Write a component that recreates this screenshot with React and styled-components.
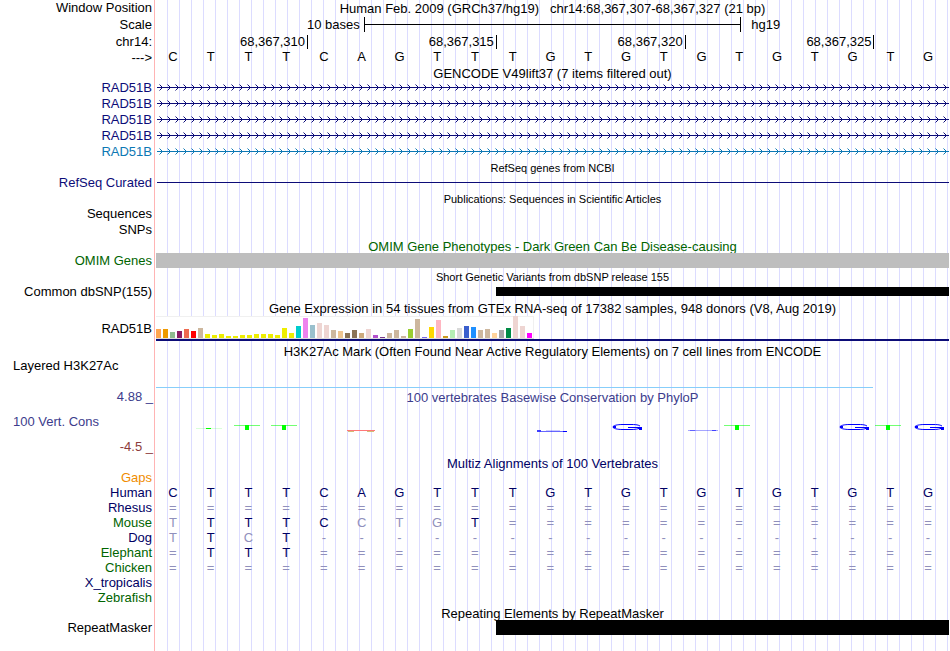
import React, { useId } from 'react'
import styled, { createGlobalStyle } from 'styled-components'

const Colors = {
  BLACK: '#000000',
  NAVY: '#0c0c78',
  DEEP_NAVY: '#000064',
  BLUE: '#0c78b4',
  GREEN: '#006400',
  SLATE: '#3c3c8c',
  BRICK: '#8c3c3c',
  ORANGE: '#f08c00',
  GRAY: '#bebebe',
  SKY: '#87cefa',
  GRID: '#dcdcff',
  MARGIN_LINE: '#ffb4b4',
  FADED: '#9090bc',
}

const BASES = 'CTTTCAGTTTGTGTGTGTGTG'

const TRANSCRIPTS = [Colors.NAVY, Colors.NAVY, Colors.NAVY, Colors.NAVY, Colors.BLUE]

const TICKS = [
  { position: '68,367,310', from: 1, to: 5 },
  { position: '68,367,315', from: 5, to: 10 },
  { position: '68,367,320', from: 10, to: 15 },
  { position: '68,367,325', from: 15, to: 20 },
]

const SPECIES = [
  { name: 'Gaps', color: Colors.ORANGE, bases: '' },
  { name: 'Human', color: Colors.DEEP_NAVY, bases: BASES },
  { name: 'Rhesus', color: Colors.DEEP_NAVY, bases: '=====================' },
  { name: 'Mouse', color: Colors.GREEN, bases: 'TTTTCCTGT============' },
  { name: 'Dog', color: Colors.DEEP_NAVY, bases: 'TTCT-----------------' },
  { name: 'Elephant', color: Colors.GREEN, bases: '=TTT=================' },
  { name: 'Chicken', color: Colors.GREEN, bases: '=====================' },
  { name: 'X_tropicalis', color: Colors.DEEP_NAVY, bases: '' },
  { name: 'Zebrafish', color: Colors.GREEN, bases: '' },
]

// [height, color] for each of the 54 tissues
const TISSUES = [
  [9, '#ffa54f'], [9, '#ee9a00'], [6, '#8fbc8f'], [7, '#8b1c62'], [9, '#ee6a50'], [7, '#ff0000'],
  [10, '#cdb79e'], [4, '#eeee00'], [3, '#eeee00'], [4, '#eeee00'], [2, '#eeee00'], [2, '#eeee00'],
  [3, '#eeee00'], [3, '#eeee00'], [4, '#eeee00'], [4, '#eeee00'], [4, '#eeee00'], [3, '#eeee00'],
  [10, '#eeee00'], [5, '#eeee00'], [12, '#00cdcd'], [20, '#ee82ee'], [13, '#9ac0cd'], [15, '#eed5d2'],
  [13, '#eed5d2'], [8, '#cdb79e'], [7, '#eec591'], [5, '#8b7355'], [8, '#8b7355'], [5, '#cdaa7d'],
  [9, '#eed5d2'], [3, '#b452cd'], [1, '#7a378b'], [5, '#cdb79e'], [8, '#cdb79e'], [2, '#cdb79e'],
  [9, '#9acd32'], [19, '#cdb79e'], [1, '#7a67ee'], [11, '#ffd700'], [18, '#ffb6c1'], [2, '#cd9b1d'],
  [8, '#b4eeb4'], [10, '#d9d9d9'], [12, '#3a5fcd'], [11, '#1e90ff'], [8, '#cdb79e'], [9, '#cdb79e'],
  [5, '#ffd39b'], [8, '#a6a6a6'], [10, '#008b45'], [22, '#eed5d2'], [12, '#eed5d2'], [5, '#ff00ff'],
]

const MARKS = {
  1: 'faintT', 2: 'T', 3: 'T', 5: 'A', 10: 'flatG', 12: 'G', 14: 'faintG', 15: 'T', 18: 'G', 19: 'T', 20: 'G',
}

const GlobalStyle = createGlobalStyle`
  body {
    margin: 0;
    background: white;
    font-family: "Liberation Sans", Arial, sans-serif;
    font-size: 13px;
  }
`

const Browser = styled.main`
  min-height: 100vh;
  overflow: hidden;
  background-image:
    linear-gradient(${Colors.MARGIN_LINE}, ${Colors.MARGIN_LINE}),
    repeating-linear-gradient(to right, transparent 0 11px, ${Colors.GRID} 11px 12px);
  background-position: 154px 0, 156px 0;
  background-size: 1px 100%, calc(100% - 157px) 100%;
  background-repeat: no-repeat;
`

const Row = styled.div`
  display: grid;
  grid-template-columns: 156px minmax(0, 1fr);
  padding-right: 1px;
  min-height: ${props => props.$height || 16}px;
  line-height: ${props => props.$height || 16}px;
`

const BaseRow = styled(Row)`
  grid-template-columns: 154px minmax(0, 1fr);
  padding-right: 3px;
`

const Label = styled.div`
  color: ${props => props.$color || Colors.BLACK};
  padding: 0 4px 0 13px;
  text-align: ${props => props.$align || 'right'};
  white-space: nowrap;
`

const BaseLabel = styled(Label)`padding-right: 2px;`

const ScoreLabel = styled(Label)`padding-right: 3px;`

const SignalLabel = styled(Label)`line-height: 10px;`

const Title = styled.h2`
  grid-column: 2;
  margin: 1px 0 -1px;
  color: ${props => props.$color || Colors.BLACK};
  font-size: ${props => props.$small ? 11 : 13}px;
  font-weight: normal;
  line-height: inherit;
  text-align: center;
  white-space: pre;
`

const Lane = styled.div`
  display: grid;
  grid-template-columns: repeat(${props => props.$columns || 21}, minmax(0, 1fr));
  align-items: ${props => props.$align || 'center'};
`

const ScaleText = styled.span`
  grid-column: ${props => props.$span};
  padding: ${props => props.$end ? '0 0 0 10px' : '0 4px 0 0'};
  text-align: ${props => props.$end ? 'left' : 'right'};
`

const ScaleBar = styled.div`
  grid-column: 12 / 32;
  height: 15px;
  border: solid black;
  border-width: 0 1px;
  background: linear-gradient(black, black) center / 100% 1px no-repeat;
`

const Tick = styled.span`
  grid-column: ${props => props.$from} / ${props => props.$to};
  margin-right: -1px;
  padding-right: 2px;
  border-right: 1px solid black;
  line-height: 14px;
  text-align: right;
`

const Base = styled.span`
  text-align: center;
  line-height: 14px;
`

const Drawing = styled.svg`
  display: block;
  width: 100%;
  height: 16px;
`

const Block = styled.div`
  grid-column: ${props => props.$from || 1} / -1;
  height: ${props => props.$height || 15}px;
  background: ${props => props.$color || Colors.BLACK};
`

const IntronLine = styled.div`
  grid-column: 1 / -1;
  height: 1px;
  margin: 7px 0 8px 1px;
  background: ${Colors.NAVY};
`

const SignalLine = styled.div`
  grid-column: 1 / 20;
  height: 1px;
  background: ${Colors.SKY};
`

const Expression = styled.div`
  border-bottom: 2px solid ${Colors.NAVY};
`

const TissueChart = styled.div`
  display: flex;
  align-items: flex-end;
  gap: 2px;
  width: max-content;
  height: 22px;
  padding-right: 2px;
  background: white;
  border-bottom: 1px solid #dcdcdc;
  box-shadow: inset 0 1px #f0f0f0, inset -1px 0 #f0f0f0;
`

const Tissue = styled.div`
  width: 5px;
  height: ${props => props.$height}px;
  background: ${props => props.$color};
`

const Alignment = styled.table`
  width: calc(100% - 3px);
  table-layout: fixed;
  border-collapse: collapse;
  line-height: 15px;
`

const Species = styled.th`
  width: 154px;
  box-sizing: border-box;
  padding: 0 2px 0 0;
  color: ${props => props.$color};
  font-weight: normal;
  text-align: right;
`

const Aligned = styled.td`
  height: 15px;
  padding: 0;
  color: ${props => props.$match ? Colors.DEEP_NAVY : Colors.FADED};
  text-align: center;
`

const Transcript = ({ color }) => {
  const id = useId()
  return (
    <Drawing>
      <defs>
        <pattern id={id} width="8" height="16" patternUnits="userSpaceOnUse">
          <path d="M6 7h1v1h-1zM5 6h1v1h-1zM5 8h1v1h-1zM4 5h1v1h-1zM4 9h1v1h-1z" fill={color} />
          <path d="M3 4h1v1h-1zM3 10h1v1h-1z" fill={color} opacity="0.5" />
        </pattern>
      </defs>
      <rect x="1" y="7" width="100%" height="1" fill={color} />
      <rect x="1" width="100%" height="16" fill={`url(#${id})`} />
    </Drawing>
  )
}

const ConservationMark = ({ kind }) => (
  <Drawing>
    {kind === 'T' && (
      <g fill="#00ff00">
        <rect x="2" y="3" width="26" height="1" opacity="0.55" />
        <rect x="13" y="3" width="4" height="5" />
      </g>
    )}
    {kind === 'faintT' && (
      <g fill="#00ff00">
        <rect x="2" y="6" width="26" height="1" opacity="0.15" />
        <rect x="12" y="6" width="5" height="1" />
      </g>
    )}
    {kind === 'A' && (
      <g>
        <rect x="2" y="8" width="28" height="1" fill="#ff7878" />
        <rect x="3" y="9" width="6" height="1" fill="#d2be78" />
        <rect x="22" y="9" width="7" height="1" fill="#d2be78" />
      </g>
    )}
    {kind === 'G' && (
      <g fill="none" stroke="#0000ff">
        <path d="M31 4C29 2.500 25 2.500 22 2.500H14C8 2.500 4 3.500 4 5S8 7.500 14 7.500H22C26 7.500 29 7 31 6" />
        <path d="M4 5h3M29 6h4" strokeWidth="2" />
        <path d="M19 5.500h13M30 7.500h3" />
      </g>
    )}
    {kind === 'flatG' && (
      <g fill="#0000ff">
        <rect x="3" y="8" width="4" height="2" opacity="0.75" />
        <rect x="7" y="9" width="22" height="1" opacity="0.6" />
        <rect x="12" y="8" width="14" height="1" opacity="0.2" />
        <rect x="29" y="9" width="4" height="1" />
      </g>
    )}
    {kind === 'faintG' && (
      <g fill="#0000ff">
        <rect x="3" y="8" width="30" height="1" opacity="0.35" />
        <rect x="5" y="8" width="5" height="1" opacity="0.4" />
        <rect x="27" y="8" width="4" height="1" opacity="0.6" />
      </g>
    )}
  </Drawing>
)

const TitleRow = ({ children, height, color, small }) => (
  <Row $height={height}><Title $color={color} $small={small}>{children}</Title></Row>
)

const Position = () => (
  <header>
    <Row>
      <Label>Window Position</Label>
      <Title>{'Human Feb. 2009 (GRCh37/hg19)   chr14:68,367,307-68,367,327 (21 bp)'}</Title>
    </Row>
    <Row $height={17}>
      <Label>Scale</Label>
      <Lane $columns={42}>
        <ScaleText $span="1 / 12">10 bases</ScaleText>
        <ScaleBar />
        <ScaleText $span="32 / -1" $end>hg19</ScaleText>
      </Lane>
    </Row>
    <Row $height={17}>
      <Label>chr14:</Label>
      <Lane>
        {TICKS.map(tick => (
          <Tick key={tick.position} $from={tick.from} $to={tick.to}>{tick.position}</Tick>
        ))}
      </Lane>
    </Row>
    <BaseRow>
      <BaseLabel>---&gt;</BaseLabel>
      <Lane $align="start">
        {BASES.split('').map((base, i) => <Base key={i}>{base}</Base>)}
      </Lane>
    </BaseRow>
  </header>
)

const GeneTracks = () => (
  <section>
    <TitleRow height={14}>GENCODE V49lift37 (7 items filtered out)</TitleRow>
    {TRANSCRIPTS.map((color, i) => (
      <Row key={i}>
        <Label $color={color}>RAD51B</Label>
        <Transcript color={color} />
      </Row>
    ))}
    <TitleRow height={15} small>RefSeq genes from NCBI</TitleRow>
    <Row>
      <Label $color={Colors.NAVY}>RefSeq Curated</Label>
      <Lane><IntronLine /></Lane>
    </Row>
  </section>
)

const VariantTracks = () => (
  <section>
    <TitleRow height={15} small>Publications: Sequences in Scientific Articles</TitleRow>
    <Row><Label>Sequences</Label></Row>
    <Row><Label>SNPs</Label></Row>
    <TitleRow height={15} color={Colors.GREEN}>OMIM Gene Phenotypes - Dark Green Can Be Disease-causing</TitleRow>
    <Row $height={15}>
      <Label $color={Colors.GREEN}>OMIM Genes</Label>
      <Lane><Block $color={Colors.GRAY} /></Lane>
    </Row>
    <TitleRow small>Short Genetic Variants from dbSNP release 155</TitleRow>
    <Row $height={15}>
      <Label>Common dbSNP(155)</Label>
      <Lane><Block $from={10} $height={9} /></Lane>
    </Row>
  </section>
)

const RegulationTracks = () => (
  <section>
    <TitleRow height={17}>Gene Expression in 54 tissues from GTEx RNA-seq of 17382 samples, 948 donors (V8, Aug 2019)</TitleRow>
    <Row $height={25}>
      <Label>RAD51B</Label>
      <Expression>
        <TissueChart>
          {TISSUES.map(([height, color], i) => <Tissue key={i} $height={height} $color={color} />)}
        </TissueChart>
      </Expression>
    </Row>
    <TitleRow height={20}>H3K27Ac Mark (Often Found Near Active Regulatory Elements) on 7 cell lines from ENCODE</TitleRow>
    <Row $height={27}>
      <SignalLabel $align="left">Layered H3K27Ac</SignalLabel>
      <Lane $align="end"><SignalLine /></Lane>
    </Row>
  </section>
)

const Conservation = () => (
  <section>
    <Row $height={18}>
      <ScoreLabel $color={Colors.SLATE}>4.88 _</ScoreLabel>
      <Title $color={Colors.SLATE}>100 vertebrates Basewise Conservation by PhyloP</Title>
    </Row>
    <Row $height={32}>
      <Label $color={Colors.SLATE} $align="left">100 Vert. Cons</Label>
      <Lane $align="end">
        {BASES.split('').map((base, i) => <ConservationMark key={i} kind={MARKS[i]} />)}
      </Lane>
    </Row>
    <Row $height={17}>
      <ScoreLabel $color={Colors.BRICK}>-4.5 _</ScoreLabel>
    </Row>
    <TitleRow height={15} color={Colors.DEEP_NAVY}>Multiz Alignments of 100 Vertebrates</TitleRow>
    <Alignment>
      <tbody>
        {SPECIES.map(({ name, color, bases }) => (
          <tr key={name}>
            <Species scope="row" $color={color}>{name}</Species>
            {BASES.split('').map((base, i) => (
              <Aligned key={i} $match={bases[i] === base}>{bases[i]}</Aligned>
            ))}
          </tr>
        ))}
      </tbody>
    </Alignment>
  </section>
)

const Repeats = () => (
  <section>
    <TitleRow height={15}>Repeating Elements by RepeatMasker</TitleRow>
    <Row $height={15}>
      <Label>RepeatMasker</Label>
      <Lane><Block $from={10} /></Lane>
    </Row>
  </section>
)

export default () => (
  <Browser>
    <GlobalStyle />
    <Position />
    <GeneTracks />
    <VariantTracks />
    <RegulationTracks />
    <Conservation />
    <Repeats />
  </Browser>
)
